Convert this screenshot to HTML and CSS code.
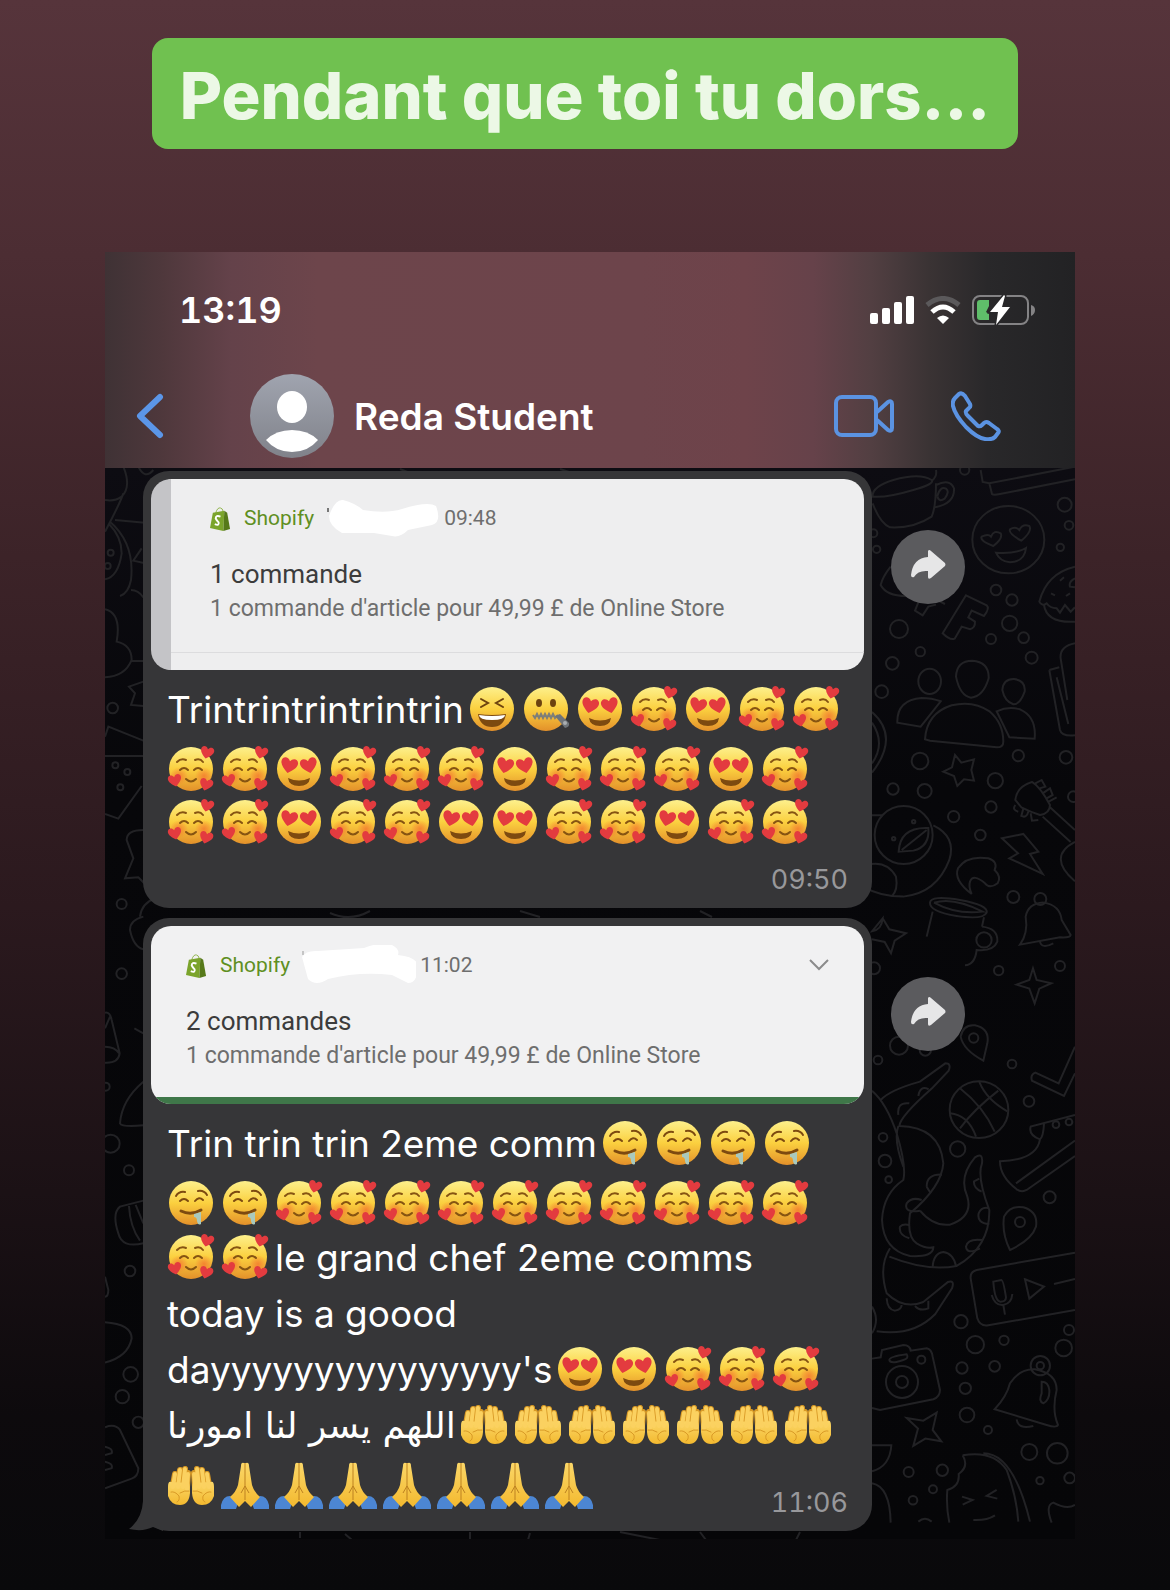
FILE: index.html
```html
<!DOCTYPE html>
<html lang="fr">
<head>
    <meta charset="UTF-8">
    <meta name="viewport" content="width=device-width, initial-scale=1.0">
    <title>Pendant que toi tu dors...</title>
    <link rel="stylesheet" href="styles.css">
</head>
<body>
    <!-- shared drawings -->
    <svg class="sprite" aria-hidden="true">
        <defs>
            <linearGradient id="skin" x1="0" y1="0" x2="0" y2="1">
                <stop offset="0" stop-color="#fdf08c"/>
                <stop offset="0.5" stop-color="#fbd03f"/>
                <stop offset="1" stop-color="#e3902a"/>
            </linearGradient>
            <radialGradient id="blush">
                <stop offset="0" stop-color="#f4772e" stop-opacity="0.8"/>
                <stop offset="1" stop-color="#f4772e" stop-opacity="0"/>
            </radialGradient>
            <linearGradient id="hand" x1="0" y1="0" x2="0" y2="1">
                <stop offset="0" stop-color="#fbd768"/>
                <stop offset="1" stop-color="#f3b92f"/>
            </linearGradient>
            <path id="heart" fill="#e33b3f" d="M0 6C-4 3-7 0-7-3C-7-7-2-8 0-4C2-8 7-7 7-3C7 0 4 3 0 6Z"/>
        </defs>
        <symbol id="eyes" viewBox="0 0 54 54">
            <circle cx="24" cy="27" r="22" fill="url(#skin)"/>
            <path d="M13 36Q24 41 35 36Q34 44 24 44Q14 44 13 36Z" fill="#7d4a10"/>
            <use href="#heart" transform="translate(14 24) rotate(12) scale(1.2)"/>
            <use href="#heart" transform="translate(34 24) rotate(-12) scale(1.2)"/>
        </symbol>
        <symbol id="love" viewBox="0 0 54 54">
            <circle cx="24" cy="27" r="22" fill="url(#skin)"/>
            <circle cx="12" cy="34" r="9" fill="url(#blush)"/>
            <circle cx="37" cy="34" r="9" fill="url(#blush)"/>
            <g fill="none" stroke="#865412" stroke-width="2" stroke-linecap="round">
                <path d="M10 20Q14 16 19 18M28 18Q33 16 36 20"/>
                <path d="M13 28Q17 24 21 28M27 28Q31 24 35 28"/>
                <path d="M19 37Q24 42 29 37"/>
            </g>
            <use href="#heart" transform="translate(40 11) rotate(14) scale(0.95)"/>
            <use href="#heart" transform="translate(8 39) rotate(-12) scale(0.95)"/>
            <use href="#heart" transform="translate(39 43) rotate(16) scale(0.95)"/>
        </symbol>
        <symbol id="drool" viewBox="0 0 54 54">
            <circle cx="24" cy="27" r="22" fill="url(#skin)"/>
            <g fill="none" stroke="#7d4a10" stroke-width="2" stroke-linecap="round">
                <path d="M9 20Q12 15 18 16M31 15Q37 14 40 19"/>
                <path d="M13 25Q17 21 21 25M28 25Q32 20 36 24"/>
                <path d="M14 35Q24 40 34 34" stroke-width="3"/>
            </g>
            <path d="M27 38L34 36V48Q31 50 30 45Q30 41 27 41Z" fill="#a9c9bd"/>
        </symbol>
        <symbol id="laugh" viewBox="0 0 54 54">
            <circle cx="24" cy="27" r="22" fill="url(#skin)"/>
            <path d="M13 17L20 21L13 25M35 17L28 21L35 25" fill="none" stroke="#6d430f" stroke-width="2" stroke-linecap="round"/>
            <path d="M10 32Q24 34 38 32Q36 45 24 45Q12 45 10 32Z" fill="#7d4a10"/>
            <path d="M11 33Q24 35 37 33Q37 38 24 38Q11 38 11 33Z" fill="#fff"/>
        </symbol>
        <symbol id="zip" viewBox="0 0 54 54">
            <circle cx="24" cy="27" r="22" fill="url(#skin)"/>
            <ellipse cx="17" cy="21" rx="3" ry="4" fill="#6d430f"/>
            <ellipse cx="31" cy="21" rx="3" ry="4" fill="#6d430f"/>
            <path d="M11 33L13 36L15 32L17 36L19 32L21 36L23 32L25 36L27 32L29 36L31 32L33 36L36 33" fill="none" stroke="#7e7f78" stroke-width="2"/>
            <path d="M33 34L38 32L47 41Q48 45 43 46Z" fill="#6f7479"/>
            <circle cx="43" cy="41" r="2" fill="#a9adb0"/>
        </symbol>
        <symbol id="palms" viewBox="0 0 54 54">
            <g id="palm" stroke-linecap="round" fill="none">
                <path d="M6 26L8 15M11 26L13 11M16 26L18 10M20 28L21 14" stroke="#d99a26" stroke-width="6"/>
                <path d="M1 28Q1 22 4 23L22 24Q23 26 23 34Q22 46 13 46Q4 46 1 37Z" fill="url(#hand)" stroke="none"/>
                <path d="M6 28L8 15M11 28L13 11M16 28L18 10M20 30L21 15" stroke="#fbd160" stroke-width="4"/>
                <path d="M4 33Q8 32 12 37Q13 42 10 43M13 34Q18 31 22 32" stroke="#d99a26" stroke-width="1"/>
            </g>
            <use href="#palm" transform="translate(48 0) scale(-1 1)"/>
        </symbol>
        <symbol id="pray" viewBox="0 0 54 54">
            <path d="M0 46Q2 37 9 37L17 44L15 50H0ZM48 46Q46 37 39 37L31 44L33 50H48Z" fill="#4c86d3"/>
            <path d="M23 4Q20 3 20 7L17 26Q15 33 9 38L18 48L24 42L30 48L39 38Q33 33 31 26L28 7Q28 3 25 4Z" fill="url(#hand)"/>
            <path d="M24 4V41M20 34L24 27L28 34" fill="none" stroke="#bd8120" stroke-width="1"/>
        </symbol>
        <symbol id="bag" viewBox="0 0 22 26">
            <path d="M6 7Q8 1 11 2Q13 2 14 6" fill="none" stroke="#8fb34b" stroke-width="1"/>
            <path d="M3 7L15 5L14 26L0 23Z" fill="#7ba42c"/>
            <path d="M15 5L18 7L21 24L14 26Z" fill="#56791a"/>
            <path d="M11 11Q6 9 6 13Q7 15 9 17Q10 21 5 19" fill="none" stroke="#fff" stroke-width="2"/>
        </symbol>
        <symbol id="share" viewBox="0 0 74 74">
            <path d="M37 21Q38 19 40 21L54 33Q55 35 54 36L40 48Q37 50 37 47V41Q27 40 23 47Q20 48 20 45Q22 28 37 27Z" fill="#e6e6e7"/>
        </symbol>
    </svg>

    <h1 class="caption">Pendant que toi tu dors...</h1>

    <main class="phone">
        <header class="top">
            <div class="status">
                <span class="clock">13:19</span>
                <div class="indicators">
                    <svg width="44" height="28" viewBox="0 0 44 28" fill="#fff">
                        <rect x="0" y="17" width="8" height="11" rx="2"/>
                        <rect x="12" y="12" width="8" height="16" rx="2"/>
                        <rect x="24" y="6" width="8" height="22" rx="2"/>
                        <rect x="36" y="0" width="8" height="28" rx="2"/>
                    </svg>
                    <svg width="38" height="28" viewBox="0 0 38 28" fill="none">
                        <path d="M3 9Q19-4 35 9" stroke="#5b595b" stroke-width="5"/>
                        <path d="M8 16Q19 6 30 16" stroke="#fff" stroke-width="5"/>
                        <path d="M13 22Q19 17 25 22L19 28Z" fill="#fff"/>
                    </svg>
                    <svg width="63" height="32" viewBox="0 0 63 32">
                        <rect x="1" y="2" width="55" height="28" rx="7" fill="none" stroke="#848385" stroke-width="2"/>
                        <path d="M59 11Q63 12 63 16Q63 20 59 22Z" fill="#848385"/>
                        <path d="M8 6H17V12L14 18L17 20V26H8Q5 26 5 23V9Q5 6 8 6Z" fill="#5fbe6a"/>
                        <path d="M32 1L18 18H26L24 31L38 13H30L33 2Z" fill="#fff" stroke="#29282a" stroke-width="3" paint-order="stroke"/>
                    </svg>
                </div>
            </div>
            <nav class="contact">
                <button class="icon-btn back" aria-label="Retour">
                    <svg width="28" height="46" viewBox="0 0 28 46"><path d="M24 4L4 23L24 42" fill="none" stroke="#5b96e8" stroke-width="6" stroke-linecap="round" stroke-linejoin="round"/></svg>
                </button>
                <svg class="avatar" width="84" height="84" viewBox="0 0 84 84">
                    <defs>
                        <linearGradient id="grey" x1="0" y1="0" x2="0" y2="1">
                            <stop offset="0" stop-color="#a0a4af"/>
                            <stop offset="1" stop-color="#80828a"/>
                        </linearGradient>
                    </defs>
                    <circle cx="42" cy="42" r="42" fill="url(#grey)"/>
                    <ellipse cx="42" cy="33" rx="15" ry="16" fill="#fff"/>
                    <path d="M16 66Q26 56 42 56Q58 56 68 66Q58 78 42 78Q26 78 16 66Z" fill="#fff"/>
                </svg>
                <h2 class="name">Reda Student</h2>
                <div class="calls">
                    <button class="icon-btn" aria-label="Appel vidéo">
                        <svg width="60" height="42" viewBox="0 0 60 42" fill="none" stroke="#5b93e2" stroke-width="4" stroke-linejoin="round">
                            <rect x="2" y="2" width="40" height="38" rx="6"/>
                            <path d="M43 17L54 7Q58 5 58 9V33Q58 37 54 35L43 25"/>
                        </svg>
                    </button>
                    <button class="icon-btn" aria-label="Appel">
                        <svg width="50" height="50" viewBox="0 0 50 50" fill="none" stroke="#5b93e2" stroke-width="4" stroke-linejoin="round">
                            <path d="M4 7L8 3Q11 1 14 5L19 13Q20 16 18 17L15 20Q14 22 17 25L27 35Q29 36 31 34L33 32Q35 30 38 32L46 38Q49 40 47 42L44 46Q41 49 34 48Q26 47 15 36Q4 24 2 15Q1 10 4 7Z"/>
                        </svg>
                    </button>
                </div>
            </nav>
        </header>

        <section class="chat">
            <!-- doodle wallpaper -->
            <svg class="wallpaper" viewBox="105 468 970 1072" preserveAspectRatio="xMaxYMin slice" aria-hidden="true">
                <g transform="translate(860 470) scale(0.3333)">
                    <path d="M38 80Q35 50 100 30Q180 8 215 30Q225 42 160 60Q80 84 38 80ZM228 0Q232 20 215 32M38 100Q60 160 90 172Q160 176 215 140Q228 110 228 40M228 45Q270 25 282 55Q285 100 226 112M232 78Q240 48 258 56Q270 64 254 86Q236 98 232 78"/>
                    <path d="M362 0L368 36L388 40L645 -10M388 40L396 72Q400 76 420 72L645 28"/>
                    <ellipse cx="445" cy="209" rx="108" ry="101"/>
                    <path d="M400 228Q358 212 365 200Q385 190 393 200Q402 178 422 190Q430 205 400 228ZM484 212Q444 190 450 178Q466 168 478 180Q488 160 508 168Q518 184 484 212ZM408 248Q470 252 498 234Q494 275 450 277Q420 275 408 248Z"/>
                    <path d="M645 290Q560 310 538 395Q545 410 560 400Q570 415 590 415L600 428L615 405L632 425L645 412M552 405Q560 460 645 455M645 325Q625 335 630 350L645 352M600 332L612 322M573 370L585 376M618 378L630 370"/>
                    <path d="M92 290Q68 320 62 345Q80 380 145 378M180 385L165 422L188 436L205 410L228 404M220 384L255 402"/>
                    <path d="M318 376L380 406Q390 415 372 438L335 422L325 442L345 455Q346 474 330 478L305 470L284 506Q270 512 248 490Z"/>
                    <ellipse cx="209" cy="634" rx="34" ry="38"/>
                    <path d="M288 620Q290 572 337 572Q388 576 386 625Q370 680 333 683Q300 678 288 620ZM427 660Q430 626 462 627Q498 632 494 665Q480 704 460 703Q434 694 427 660Z"/>
                    <path d="M195 808Q200 730 275 706Q340 690 390 725Q430 760 430 815Q430 832 410 832L210 812ZM242 694L182 770L112 758Q110 690 185 684Q215 684 242 694ZM410 724L448 802L524 806Q530 740 480 718Q445 708 410 724Z"/>
                    <path d="M645 520Q598 530 602 565L622 690M568 600L598 592M568 600L600 780Q605 800 645 796M590 622L625 762"/>
                    <path d="M36 726Q120 800 36 908M36 758Q78 820 36 880"/>
                    <path d="M285 855L304 878L342 868L334 900L342 932L312 928L292 948L282 918L250 905L276 892Z"/>
                    <circle cx="131" cy="1095" r="87"/>
                    <path d="M36 1036H66M220 1066Q290 1100 268 1170Q230 1270 130 1280Q60 1280 10 1250M20 1185Q80 1170 108 1220Q115 1260 95 1280M116 1145Q120 1070 205 1074Q210 1130 160 1142ZM125 1140L200 1080"/>
                    <path d="M516 936Q470 950 466 990L484 1012Q510 1025 540 1035Q570 1030 570 1005Q540 950 516 936ZM570 1012L645 1080M548 1040L632 1116M645 1116Q560 1160 645 1234M526 940L545 930L556 950L536 956M548 970L570 955L578 975L560 985M566 995L590 982M466 1005Q455 1020 475 1025M490 1016L484 1038Q500 1046 506 1022M512 1030L516 1052L535 1050"/>
                    <path d="M426 1105L490 1092L535 1145L510 1152L548 1212L448 1165L474 1150Z"/>
                    <path d="M335 1272Q280 1230 294 1195Q320 1155 385 1165Q415 1175 404 1200Q425 1220 413 1240Q390 1258 375 1240Q340 1210 330 1235Q325 1250 335 1272Z"/>
                    <path d="M210 1298Q212 1275 300 1290Q385 1305 380 1328Q370 1350 290 1338Q208 1325 210 1298ZM222 1298Q280 1280 368 1325Q290 1335 222 1298M218 1325L200 1400M372 1342L366 1370M366 1370Q415 1375 412 1415Q400 1445 350 1440Q345 1485 315 1486"/>
                    <circle cx="372" cy="1410" r="23"/>
                    <path d="M480 1424Q505 1390 497 1340Q505 1300 550 1298Q600 1305 605 1350L632 1395Q630 1404 600 1402ZM540 1415Q545 1438 580 1420"/>
                    <circle cx="541" cy="1287" r="18"/>
                    <path d="M68 1345L88 1378L138 1390L104 1412L93 1450L74 1416L36 1408M36 1384Q65 1380 68 1345ZM519 1495L530 1530L574 1540L538 1556L524 1600L508 1556L470 1544L508 1530Z"/>
                    <g class="dots">
                        <circle cx="614" cy="104" r="21"/><circle cx="627" cy="166" r="13"/><circle cx="601" cy="232" r="11"/><circle cx="314" cy="0" r="14"/><circle cx="50" cy="238" r="11"/><circle cx="40" cy="190" r="12"/>
                        <circle cx="408" cy="360" r="16"/><circle cx="456" cy="390" r="17"/><circle cx="449" cy="460" r="23"/><circle cx="393" cy="507" r="15"/><circle cx="491" cy="503" r="16"/><circle cx="515" cy="563" r="18"/>
                        <circle cx="117" cy="477" r="27"/><circle cx="181" cy="545" r="14"/><circle cx="97" cy="580" r="19"/><circle cx="65" cy="665" r="19"/>
                        <circle cx="180" cy="873" r="25"/><circle cx="99" cy="957" r="17"/><circle cx="194" cy="963" r="21"/><circle cx="406" cy="932" r="23"/><circle cx="475" cy="857" r="17"/><circle cx="618" cy="862" r="19"/><circle cx="393" cy="1011" r="17"/><circle cx="281" cy="1040" r="17"/><circle cx="361" cy="1095" r="16"/><circle cx="640" cy="980" r="16"/>
                        <circle cx="460" cy="1281" r="18"/><circle cx="416" cy="1502" r="14"/><circle cx="600" cy="1488" r="15"/><circle cx="42" cy="1495" r="18"/><circle cx="101" cy="1106" r="5"/><circle cx="161" cy="1055" r="5"/>
                    </g>
                </g>
                <g transform="translate(860 1020) scale(0.3333)">
                    <path d="M370 122Q310 90 302 50Q310 12 345 16Q390 26 382 70ZM450 690Q425 640 432 590Q450 555 490 562Q535 575 528 620Q515 660 450 690Z"/>
                    <circle cx="341" cy="54" r="14"/><circle cx="480" cy="606" r="15"/>
                    <path d="M645 80L596 190L526 158Q510 165 516 182L612 228L645 160"/>
                    <ellipse cx="357" cy="269" rx="88" ry="85"/>
                    <path d="M300 205Q370 260 404 335M415 212Q340 270 300 325M358 186Q380 240 442 274M270 280Q325 285 348 350"/>
                    <path d="M645 285L512 320Q505 345 540 358Q550 350 552 312M540 358Q530 420 420 424Q420 470 470 508Q485 518 500 510L645 408M468 490L645 362"/>
                    <path d="M62 240Q90 210 180 185L256 130Q275 130 266 152L216 205Q120 290 118 318Q240 320 250 430Q245 500 150 580Q140 650 170 670Q200 688 220 682Q220 712 150 708Q70 690 66 600Q70 520 130 480Q140 440 110 340Q80 250 36 212M115 318Q100 360 130 440M180 572Q220 620 270 614Q340 590 322 530Q295 470 345 412Q370 395 366 430Q350 470 388 570Q390 680 290 738Q200 755 88 710M90 685Q55 740 80 820Q130 870 190 846L264 786Q285 780 276 805L226 882Q160 950 50 934M36 860Q60 900 36 940"/>
                    <path d="M115 285Q110 245 148 250M175 228Q180 195 206 208M200 500Q200 462 246 464M212 520L200 500M180 572Q130 580 140 550Q155 530 185 540M148 655Q115 645 120 620Q130 610 150 616M218 742Q220 700 250 696Q280 700 288 738M360 685Q320 705 318 680Q322 655 366 660M388 612Q350 610 356 580Q364 560 385 564M365 515Q340 505 342 484L358 476M80 835Q82 870 105 872Q125 868 125 855M165 858Q180 875 205 865V842"/>
                    <path d="M645 698L350 750Q330 755 332 775L352 895Q360 920 385 916L645 870M400 785L424 780Q430 780 438 832Q438 846 420 845Q404 842 400 785ZM395 825Q405 858 430 855Q455 850 457 822M430 855L435 884M495 778L552 800L508 836ZM582 792L645 777"/>
                    <path d="M36 1016L62 1012L66 990L130 975Q150 975 152 992L200 985Q215 988 218 1010L240 1110Q240 1130 220 1138L60 1170L36 1164M88 1020Q88 1010 140 1003Q148 1015 130 1020Q90 1034 88 1020Z"/>
                    <circle cx="126" cy="1086" r="48"/><circle cx="126" cy="1086" r="18"/><circle cx="184" cy="1019" r="12"/>
                    <path d="M404 1168Q440 1130 450 1090Q480 1045 525 1048Q590 1060 590 1110Q575 1170 594 1215Q590 1225 560 1215ZM470 1198Q475 1230 520 1218M545 1085Q565 1085 568 1110Q570 1140 550 1150Q535 1145 545 1120Z"/>
                    <circle cx="541" cy="1037" r="29"/><circle cx="541" cy="1037" r="11"/>
                    <path d="M140 1194L190 1202L230 1178L218 1230L244 1264L196 1256L160 1278L174 1226Z"/>
                    <path d="M308 1306Q400 1290 440 1350Q470 1430 475 1505M308 1306Q328 1340 296 1362Q300 1400 262 1410Q258 1460 268 1508M370 1300Q460 1300 510 1505M306 1430L338 1440L308 1454M410 1410L380 1428L412 1436M340 1500Q380 1502 405 1486"/>
                    <path d="M36 1276H94Q90 1340 36 1354M36 1390Q90 1400 92 1508M575 1508Q555 1455 580 1448Q620 1470 645 1455M175 1505Q195 1488 215 1505"/>
                    <g class="dots">
                        <circle cx="117" cy="77" r="27"/><circle cx="196" cy="90" r="17"/><circle cx="54" cy="120" r="13"/><circle cx="456" cy="132" r="13"/><circle cx="507" cy="244" r="16"/><circle cx="588" cy="314" r="10"/><circle cx="627" cy="306" r="10"/><circle cx="293" cy="387" r="23"/>
                        <circle cx="69" cy="352" r="13"/><circle cx="75" cy="423" r="19"/><circle cx="86" cy="479" r="10"/><circle cx="569" cy="532" r="18"/><circle cx="303" cy="905" r="20"/><circle cx="346" cy="974" r="26"/><circle cx="432" cy="961" r="14"/><circle cx="627" cy="930" r="15"/><circle cx="611" cy="984" r="25"/>
                        <circle cx="306" cy="1044" r="17"/><circle cx="404" cy="1039" r="16"/><circle cx="316" cy="1105" r="17"/><circle cx="321" cy="1185" r="22"/><circle cx="384" cy="1230" r="12"/><circle cx="508" cy="1296" r="24"/><circle cx="592" cy="1300" r="31"/><circle cx="540" cy="1382" r="11"/><circle cx="629" cy="1374" r="16"/>
                        <circle cx="146" cy="1356" r="15"/><circle cx="247" cy="1351" r="17"/><circle cx="219" cy="1408" r="12"/><circle cx="159" cy="1441" r="13"/>
                    </g>
                </g>
                <g transform="translate(95 460) scale(0.3333)">
                    <path d="M85 20Q110 80 80 110Q60 125 30 120M30 215Q75 130 85 100M40 190Q80 230 80 280Q70 350 30 358M60 180L150 188M45 185Q120 250 108 360Q100 400 75 408M140 265L115 302L150 310M108 390Q130 390 145 412M30 448Q80 460 65 545Q110 555 110 600Q90 650 30 652M110 603H145M145 665L102 680L120 700L108 735L145 738"/>
                    <path d="M30 830L40 800L145 842M30 888H145M30 1062L70 1076L140 978M145 1110Q95 1110 95 1140L115 1195L90 1255L130 1252L150 1272M145 1370Q105 1380 105 1410Q115 1460 145 1468M135 1370Q140 1330 180 1315M130 20Q150 60 175 30"/>
                    <g class="dots"><circle cx="53" cy="744" r="16"/><circle cx="61" cy="916" r="9"/><circle cx="97" cy="936" r="9"/><circle cx="76" cy="982" r="9"/><circle cx="47" cy="278" r="9"/><circle cx="38" cy="318" r="9"/><circle cx="80" cy="1332" r="15"/><circle cx="80" cy="1541" r="16"/></g>
                </g>
                <g transform="translate(95 1000) scale(0.3333)">
                    <path d="M30 38Q45 35 50 60L74 160Q70 190 30 188M30 140Q60 140 72 160M30 85L45 50M145 245Q80 300 75 370Q80 382 145 376M145 602L75 620Q50 640 70 700Q80 745 145 730M102 618Q105 680 135 722M122 615L145 670M30 830L40 870Q40 890 30 890M20 966Q110 970 110 1015Q100 1070 30 1088M30 1282Q60 1270 75 1290L130 1405Q130 1430 110 1436L30 1465M30 1340Q55 1345 50 1360L30 1365M30 1385Q55 1390 50 1405L30 1410M118 85L145 100"/>
                    <g class="dots"><circle cx="47" cy="431" r="27"/><circle cx="102" cy="511" r="15"/><circle cx="105" cy="813" r="16"/><circle cx="107" cy="1123" r="22"/><circle cx="82" cy="1190" r="20"/><circle cx="130" cy="1267" r="17"/><circle cx="32" cy="260" r="12"/></g>
                </g>
                <path d="M300 1532V1538M345 1534L352 1540M470 1532V1540M530 1533L528 1540M620 1532L660 1540M700 1532L706 1540M800 1532L796 1540M330 913Q350 922 370 911M520 911L540 917M700 911L712 917M560 469L575 474M400 469L410 473"/>
            </svg>

            <article class="row">
                <div class="bubble">
                    <div class="card striped">
                        <div class="card-head">
                            <svg class="bag" aria-hidden="true"><use href="#bag"/></svg>
                            <span class="app">Shopify</span>
                            <svg class="smudge" viewBox="0 0 116 40" aria-hidden="true">
                                <path d="M4 10V14" stroke="#777" stroke-width="2"/>
                                <path d="M5 18Q11 1 19 2Q31 5 39 12Q62 16 78 11Q104 3 112 8Q118 24 108 27L84 32Q76 40 68 38L50 35L18 35Q5 28 5 18Z" fill="#fff"/>
                            </svg>
                            <time>09:48</time>
                        </div>
                        <h3>1 commande</h3>
                        <p>1 commande d'article pour 49,99 £ de Online Store</p>
                        <div class="card-rule"></div>
                    </div>
                    <div class="message">
                        <div class="line first"><span>Trintrintrintrintrin</span><svg class="emoji"><use href="#laugh"/></svg><svg class="emoji"><use href="#zip"/></svg><svg class="emoji"><use href="#eyes"/></svg><svg class="emoji"><use href="#love"/></svg><svg class="emoji"><use href="#eyes"/></svg><svg class="emoji"><use href="#love"/></svg><svg class="emoji"><use href="#love"/></svg></div>
                        <div class="line tight"><svg class="emoji"><use href="#love"/></svg><svg class="emoji"><use href="#love"/></svg><svg class="emoji"><use href="#eyes"/></svg><svg class="emoji"><use href="#love"/></svg><svg class="emoji"><use href="#love"/></svg><svg class="emoji"><use href="#love"/></svg><svg class="emoji"><use href="#eyes"/></svg><svg class="emoji"><use href="#love"/></svg><svg class="emoji"><use href="#love"/></svg><svg class="emoji"><use href="#love"/></svg><svg class="emoji"><use href="#eyes"/></svg><svg class="emoji"><use href="#love"/></svg></div>
                        <div class="line tight"><svg class="emoji"><use href="#love"/></svg><svg class="emoji"><use href="#love"/></svg><svg class="emoji"><use href="#eyes"/></svg><svg class="emoji"><use href="#love"/></svg><svg class="emoji"><use href="#love"/></svg><svg class="emoji"><use href="#eyes"/></svg><svg class="emoji"><use href="#eyes"/></svg><svg class="emoji"><use href="#love"/></svg><svg class="emoji"><use href="#love"/></svg><svg class="emoji"><use href="#eyes"/></svg><svg class="emoji"><use href="#love"/></svg><svg class="emoji"><use href="#love"/></svg></div>
                        <div class="line foot"><time class="sent">09:50</time></div>
                    </div>
                </div>
                <button class="forward" aria-label="Transférer"><svg width="74" height="74"><use href="#share"/></svg></button>
            </article>

            <article class="row">
                <div class="bubble">
                    <div class="card">
                        <div class="card-head">
                            <svg class="bag" aria-hidden="true"><use href="#bag"/></svg>
                            <span class="app">Shopify</span>
                            <svg class="smudge" viewBox="0 0 116 40" aria-hidden="true">
                                <path d="M3 6V10" stroke="#999" stroke-width="1"/>
                                <path d="M2 12Q6 5 18 6L64 3Q82-4 92 0Q100 4 98 10Q116 12 118 20Q118 38 108 38L92 30Q60 26 28 34Q16 42 8 34Z" fill="#fff"/>
                            </svg>
                            <time>11:02</time>
                            <svg class="chevron" width="20" height="12" viewBox="0 0 20 12"><path d="M1 1L10 10L19 1" fill="none" stroke="#8b8b8b" stroke-width="2"/></svg>
                        </div>
                        <h3>2 commandes</h3>
                        <p>1 commande d'article pour 49,99 £ de Online Store</p>
                        <div class="card-bar"></div>
                    </div>
                    <div class="message">
                        <div class="line first"><span>Trin trin trin 2eme comm</span><svg class="emoji"><use href="#drool"/></svg><svg class="emoji"><use href="#drool"/></svg><svg class="emoji"><use href="#drool"/></svg><svg class="emoji"><use href="#drool"/></svg></div>
                        <div class="line tight"><svg class="emoji"><use href="#drool"/></svg><svg class="emoji"><use href="#drool"/></svg><svg class="emoji"><use href="#love"/></svg><svg class="emoji"><use href="#love"/></svg><svg class="emoji"><use href="#love"/></svg><svg class="emoji"><use href="#love"/></svg><svg class="emoji"><use href="#love"/></svg><svg class="emoji"><use href="#love"/></svg><svg class="emoji"><use href="#love"/></svg><svg class="emoji"><use href="#love"/></svg><svg class="emoji"><use href="#love"/></svg><svg class="emoji"><use href="#love"/></svg></div>
                        <div class="line"><svg class="emoji"><use href="#love"/></svg><svg class="emoji"><use href="#love"/></svg><span>le grand chef 2eme comms</span></div>
                        <div class="line"><span>today is a goood</span></div>
                        <div class="line"><span>dayyyyyyyyyyyyyyy's</span><svg class="emoji"><use href="#eyes"/></svg><svg class="emoji"><use href="#eyes"/></svg><svg class="emoji"><use href="#love"/></svg><svg class="emoji"><use href="#love"/></svg><svg class="emoji"><use href="#love"/></svg></div>
                        <div class="line"><span class="arabic" lang="ar" dir="rtl">اللهم يسر لنا امورنا</span><svg class="emoji"><use href="#palms"/></svg><svg class="emoji"><use href="#palms"/></svg><svg class="emoji"><use href="#palms"/></svg><svg class="emoji"><use href="#palms"/></svg><svg class="emoji"><use href="#palms"/></svg><svg class="emoji"><use href="#palms"/></svg><svg class="emoji"><use href="#palms"/></svg></div>
                        <div class="line last"><svg class="emoji"><use href="#palms"/></svg><svg class="emoji"><use href="#pray"/></svg><svg class="emoji"><use href="#pray"/></svg><svg class="emoji"><use href="#pray"/></svg><svg class="emoji"><use href="#pray"/></svg><svg class="emoji"><use href="#pray"/></svg><svg class="emoji"><use href="#pray"/></svg><svg class="emoji"><use href="#pray"/></svg><time class="sent">11:06</time></div>
                    </div>
                    <svg class="tail" width="34" height="30" viewBox="0 0 34 30" aria-hidden="true"><path d="M14 0Q13 18 0 28Q14 31 24 26L34 30V0Z" fill="#363638"/></svg>
                </div>
                <button class="forward" aria-label="Transférer"><svg width="74" height="74"><use href="#share"/></svg></button>
            </article>
        </section>
    </main>
</body>
</html>
```
FILE: styles.css
```css
* {
    box-sizing: border-box;
}

body {
    margin: 0;
    padding: 38px 0 50px;
    min-height: 100vh;
    font-family: "Inter", "Liberation Sans", sans-serif;
    color: #fff;
    background: linear-gradient(#56343b 0%, #4c2d33 16%, #3c2328 35%, #2b191e 57%, #1b1115 75%, #0d0a0d 89%, #09090b 100%);
}

h1, h2, h3, p {
    margin: 0;
}

button {
    padding: 0;
    border: none;
    background: none;
    cursor: pointer;
}

svg {
    display: block;
    flex-shrink: 0;
}

.sprite {
    position: absolute;
    width: 0;
    height: 0;
}

.caption {
    width: fit-content;
    margin: 0 auto 103px;
    padding: 4px 28px 0;
    border-radius: 16px;
    font-size: 65px;
    font-weight: 800;
    line-height: 107px;
    color: #ecf8e6;
    background: #70c150;
}

.phone {
    margin: 0 95px 0 105px;
}

/* header */
.top {
    height: 216px;
    background: linear-gradient(90deg, #3f3235 0%, #4f383c 6%, #64424a 13%, #6d454b 22%, #6d444b 55%, #6e434a 66%, #66424a 73%, #523f42 79%, #3a3334 85%, #29282a 91%, #222224 100%);
}

.status {
    display: flex;
    justify-content: space-between;
    align-items: center;
    height: 116px;
    padding: 0 40px 0 74px;
}

.clock {
    font-size: 36px;
    font-weight: 600;
    font-variant-numeric: tabular-nums;
}

.indicators {
    display: flex;
    align-items: center;
    gap: 10px;
}

.contact {
    display: flex;
    align-items: center;
    height: 96px;
    padding: 0 74px 0 31px;
}

.back {
    margin-right: 86px;
}

.avatar {
    margin-right: 20px;
}

.name {
    font-size: 37px;
    font-weight: 600;
}

.calls {
    display: flex;
    align-items: center;
    gap: 57px;
    margin-left: auto;
}

/* conversation */
.chat {
    position: relative;
    display: flex;
    flex-direction: column;
    gap: 10px;
    padding: 3px 110px 8px 38px;
    background: linear-gradient(#0d0c12, #07070a 30%, #060608);
}

.wallpaper {
    position: absolute;
    inset: 0;
    width: 100%;
    height: 100%;
    fill: none;
    stroke: #222225;
    stroke-width: 2;
}

.wallpaper g {
    stroke-width: 6;
}

.row {
    position: relative;
    display: flex;
    align-items: flex-start;
    gap: 19px;
}

.bubble {
    position: relative;
    flex: 1;
    min-width: 0;
    padding: 8px 8px 12px;
    border-radius: 26px;
    background: #363638;
}

.forward {
    flex: none;
    width: 74px;
    height: 74px;
    margin-top: 59px;
    border-radius: 50%;
    background: #5b5b5e;
}

.card {
    padding: 23px 35px 0;
    border-radius: 20px;
    overflow: hidden;
    font-family: "Roboto", sans-serif;
    color: #6e6e6e;
    background: #f1f1f2;
}

.striped {
    padding-left: 39px;
    border-left: 20px solid #c4c4c7;
    background: #eeeeef;
}

.card-head {
    display: flex;
    align-items: center;
    height: 32px;
    margin-bottom: 23px;
    font-size: 21px;
}

.bag {
    width: 21px;
    height: 25px;
    margin-right: 13px;
}

.app {
    color: #5f8f22;
}

.smudge {
    width: 116px;
    height: 40px;
    margin: 0 4px 0 10px;
}

.chevron {
    margin-left: auto;
}

.card h3 {
    font-size: 26px;
    font-weight: 400;
    line-height: 34px;
    color: #3c3c3c;
}

.card p {
    font-size: 23px;
    line-height: 36px;
}

.card-rule {
    height: 18px;
    margin: 25px -35px 0 -39px;
    border-top: 1px solid #dcdcde;
}

.card-bar {
    height: 7px;
    margin: 23px -35px 0;
    background: #3f7749;
}

.message {
    padding: 11px 16px 0;
    font-size: 37px;
}

.line {
    display: flex;
    align-items: center;
    height: 56px;
    white-space: nowrap;
}

.first {
    margin-bottom: 5px;
}

.tight {
    height: 53px;
}

.foot {
    height: 48px;
}

.last {
    height: 66px;
}

.emoji {
    width: 54px;
    height: 54px;
}

.line span + .emoji {
    margin-left: 4px;
}

.arabic {
    font-family: "DejaVu Sans", sans-serif;
    font-size: 36px;
}

.sent {
    align-self: flex-end;
    margin-left: auto;
    font-size: 27px;
    font-variant-numeric: tabular-nums;
    line-height: 32px;
    color: #98989b;
}

.tail {
    position: absolute;
    left: -14px;
    bottom: 0;
}
```
